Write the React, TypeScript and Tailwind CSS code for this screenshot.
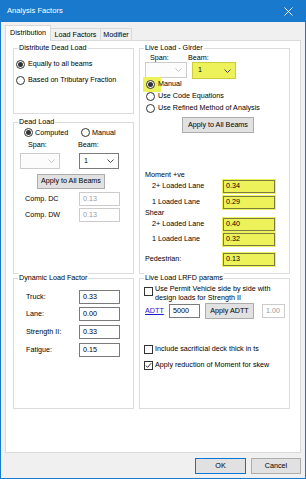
import React from 'react'

function Radio({ checked }: { checked?: boolean }) {
  return (
    <span className="w-[9px] h-[9px] rounded-full border border-[#333333] bg-white flex items-center justify-center shrink-0">
      {checked && <span className="w-[5px] h-[5px] rounded-full bg-[#333333]" />}
    </span>
  )
}

function CheckBox({ checked }: { checked?: boolean }) {
  return (
    <span className="w-[9px] h-[9px] border border-[#333333] bg-white flex items-center justify-center shrink-0">
      {checked && (
        <svg width="7" height="7" viewBox="0 0 7 7">
          <polyline points="0.8,3.6 2.6,5.4 6.2,1.2" fill="none" stroke="#333" strokeWidth="1" />
        </svg>
      )}
    </span>
  )
}

function Chevron({ color }: { color: string }) {
  return (
    <svg width="7" height="4" viewBox="0 0 7 4">
      <polyline points="0.5,0.5 3.5,3.5 6.5,0.5" fill="none" stroke={color} strokeWidth="1" />
    </svg>
  )
}

function ComboBox({ className, value, disabled }: { className: string; value?: string; disabled?: boolean }) {
  return (
    <div
      className={`flex items-center justify-between h-[16px] border pl-[4px] pr-[4px] ${
        disabled ? 'border-[#cccccc] bg-[#fcfcfc]' : 'border-[#7a7a7a] bg-white'
      } ${className}`}
    >
      <span>{value}</span>
      <Chevron color={disabled ? '#c4c4c4' : '#444444'} />
    </div>
  )
}

function TextBox({ className, value, disabled }: { className: string; value: string; disabled?: boolean }) {
  return (
    <div
      className={`h-[14px] flex items-center pl-[3px] border bg-white ${
        disabled ? 'border-[#cccccc] text-[#9a9a9a]' : 'border-[#7a7a7a]'
      } ${className}`}
    >
      {value}
    </div>
  )
}

// highlighted (yellow marker) text box
function MarkedBox({ value }: { value: string }) {
  return (
    <div className="w-[52px] h-[13px] flex items-center pl-[2px] border border-[#7b7c44] bg-[#eef25a] shadow-[0_0_0_1px_#eef25a]">
      {value}
    </div>
  )
}

function Button({ className, label }: { className: string; label: string }) {
  return (
    <div className={`flex items-center justify-center bg-[#e1e1e1] border border-[#adadad] ${className}`}>
      {label}
    </div>
  )
}

function GroupBox({ title, className, children }: { title: string; className: string; children: React.ReactNode }) {
  return (
    <div className={`border border-[#dcdcdc] flex flex-col ${className}`}>
      <div className="-mt-[6px] ml-[4px] px-[1px] bg-white w-fit h-[10px] leading-[10px]">{title}</div>
      {children}
    </div>
  )
}

export default function App() {
  return (
    <div className="w-[306px] h-[479px] flex flex-col bg-[#f0f0f0] border-x border-b border-[#1979cc] text-black text-[7.2px] font-['Liberation_Sans',Arial,sans-serif]">
      {/* title bar */}
      <div className="h-[22px] shrink-0 flex items-center justify-between pl-[6px] pr-[12px] bg-[#1979cc] text-white text-[7.6px]">
        <span>Analysis Factors</span>
        <svg width="9" height="9" viewBox="0 0 9 9">
          <path d="M0.5 0.5 L8.5 8.5 M8.5 0.5 L0.5 8.5" stroke="#ffffff" strokeWidth="1" />
        </svg>
      </div>

      {/* tabs */}
      <div className="h-[18px] shrink-0 flex items-end pl-[4px]">
        <div className="w-[46px] h-[16px] -mb-px relative z-10 bg-white border border-b-0 border-[#d9d9d9] flex items-center justify-center">
          Distribution
        </div>
        <div className="w-[50px] h-[12px] pt-[2px] border-t border-r border-[#d9d9d9] flex items-center justify-center">
          Load Factors
        </div>
        <div className="w-[31px] h-[12px] pt-[2px] border-t border-r border-[#d9d9d9] flex items-center justify-center">
          Modifier
        </div>
      </div>

      {/* tab page */}
      <div className="mx-[4px] h-[413px] shrink-0 bg-white border border-[#d9d9d9] flex pl-[7px] pt-[7px] gap-[5px]">
        {/* left column */}
        <div className="w-[121px] flex flex-col">
          <GroupBox title="Distribute Dead Load" className="h-[66px]">
            <div className="flex flex-col gap-[2px] pt-[4px] pl-[2px]">
              <div className="h-[14px] flex items-center gap-[3px]">
                <Radio checked />
                Equally to all beams
              </div>
              <div className="h-[14px] flex items-center gap-[3px]">
                <Radio />
                Based on Tributary Fraction
              </div>
            </div>
          </GroupBox>

          <GroupBox title="Dead Load" className="h-[152px] mt-[8px]">
            <div className="h-[12px] flex items-center pl-[10px]">
              <div className="w-[57px] flex items-center gap-[2px]">
                <Radio checked />
                Computed
              </div>
              <div className="flex items-center gap-[2px]">
                <Radio />
                Manual
              </div>
            </div>
            <div className="h-[12px] flex items-center pl-[14px]">
              <span className="w-[50px]">Span:</span>
              <span>Beam:</span>
            </div>
            <div className="mt-[2px] flex pl-[6px]">
              <ComboBox className="w-[40px]" disabled />
              <ComboBox className="w-[40px] ml-[19px]" value="1" />
            </div>
            <Button className="mt-[5px] ml-[23px] w-[68px] h-[15px]" label="Apply to All Beams" />
            <div className="mt-[3px] flex flex-col gap-[2px]">
              <div className="h-[14px] flex items-center pl-[11px]">
                <span className="w-[54px]">Comp. DC</span>
                <TextBox className="w-[41px]" value="0.13" disabled />
              </div>
              <div className="h-[14px] flex items-center pl-[11px]">
                <span className="w-[54px]">Comp. DW</span>
                <TextBox className="w-[41px]" value="0.13" disabled />
              </div>
            </div>
          </GroupBox>

          <GroupBox title="Dynamic Load Factor" className="h-[131px] mt-[4px]">
            <div className="mt-[7px] h-[14px] flex items-center pl-[12px]">
              <span className="w-[53px]">Truck:</span>
              <TextBox className="w-[41px]" value="0.33" />
            </div>
            <div className="mt-[3px] h-[14px] flex items-center pl-[12px]">
              <span className="w-[53px]">Lane:</span>
              <TextBox className="w-[41px]" value="0.00" />
            </div>
            <div className="mt-[4px] h-[14px] flex items-center pl-[12px]">
              <span className="w-[53px]">Strength II:</span>
              <TextBox className="w-[41px]" value="0.33" />
            </div>
            <div className="mt-[4px] h-[14px] flex items-center pl-[12px]">
              <span className="w-[53px]">Fatigue:</span>
              <TextBox className="w-[41px]" value="0.15" />
            </div>
          </GroupBox>
        </div>

        {/* right column */}
        <div className="w-[151px] flex flex-col">
          <GroupBox title="Live Load - Girder" className="h-[226px]">
            <div className="h-[9px] leading-[9px] flex pl-[10px]">
              <span className="w-[38px]">Span:</span>
              <span>Beam:</span>
            </div>
            <div className="h-[16px] flex pl-[5px]">
              <ComboBox className="w-[42px]" disabled />
              <div className="ml-[5px] w-[44px] h-[17px] flex items-center justify-between pl-[5px] pr-[4px] border border-[#c9cd3e] bg-[#eef25a]">
                <span>1</span>
                <Chevron color="#444444" />
              </div>
            </div>
            <div className="flex flex-col">
              <div className="h-[12px] flex items-center pl-[6px]">
                <span className="-ml-[3px] pl-[3px] pr-[6px] -mr-[3px] py-[3px] -my-[3px] bg-[#eef25a]">
                  <Radio checked />
                </span>
                Manual
              </div>
              <div className="h-[12px] flex items-center pl-[6px] gap-[3px]">
                <Radio />
                Use Code Equations
              </div>
              <div className="h-[12px] flex items-center pl-[6px] gap-[3px]">
                <Radio />
                Use Refined Method of Analysis
              </div>
            </div>
            <Button className="mt-[3px] ml-[42px] w-[72px] h-[16px]" label="Apply to All Beams" />

            <div className="mt-[37px] h-[9px] leading-[9px] pl-[5px]">Moment +ve</div>
            <div className="h-[14px] flex items-center pl-[12px]">
              <span className="w-[71px]">2+ Loaded Lane</span>
              <MarkedBox value="0.34" />
            </div>
            <div className="mt-[2px] h-[14px] flex items-center pl-[12px]">
              <span className="w-[71px]">1 Loaded Lane</span>
              <MarkedBox value="0.29" />
            </div>
            <div className="h-[8px] leading-[8px] pl-[5px]">Shear</div>
            <div className="h-[14px] flex items-center pl-[12px]">
              <span className="w-[71px]">2+ Loaded Lane</span>
              <MarkedBox value="0.40" />
            </div>
            <div className="mt-[1px] h-[14px] flex items-center pl-[12px]">
              <span className="w-[71px]">1 Loaded Lane</span>
              <MarkedBox value="0.32" />
            </div>
            <div className="mt-[6px] h-[14px] flex items-center pl-[5px]">
              <span className="w-[78px]">Pedestrian:</span>
              <MarkedBox value="0.13" />
            </div>
          </GroupBox>

          <GroupBox title="Live Load LRFD params" className="h-[131px] mt-[4px]">
            <div className="flex items-start pl-[4px] gap-[2px]">
              <span className="mt-[4px]">
                <CheckBox />
              </span>
              <span className="mt-[1px] leading-[9px]">
                Use Permit Vehicle side by side with
                <br />
                design loads for Strength II
              </span>
            </div>
            <div className="mt-[1px] h-[16px] flex items-center pl-[5px]">
              <span className="w-[24px] text-[#1a1ad0] underline">ADTT</span>
              <TextBox className="w-[31px]" value="5000" />
              <Button className="ml-[5px] w-[49px] h-[16px]" label="Apply ADTT" />
              <TextBox className="ml-[8px] w-[23px]" value="1.00" disabled />
            </div>
            <div className="mt-[26px] h-[9px] flex items-center pl-[4px] gap-[2px]">
              <CheckBox />
              Include sacrificial deck thick in ts
            </div>
            <div className="mt-[7px] h-[9px] flex items-center pl-[4px] gap-[2px]">
              <CheckBox checked />
              Apply reduction of Moment for skew
            </div>
          </GroupBox>
        </div>
      </div>

      {/* dialog buttons */}
      <div className="h-[25px] shrink-0 flex justify-end items-start pt-[5px] pr-[4px] gap-[5px]">
        <div className="w-[51px] h-[16px] flex items-center justify-center bg-[#e1e1e1] border border-[#0078d7]">OK</div>
        <Button className="w-[50px] h-[16px]" label="Cancel" />
      </div>
    </div>
  )
}
